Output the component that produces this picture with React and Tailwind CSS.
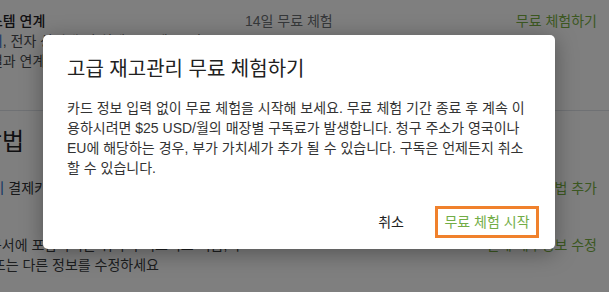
import React from 'react'

const font = { fontFamily: '"Liberation Sans", "Noto Sans CJK KR", sans-serif' }

export default function App() {
    return (
        <div className="relative h-[292px] w-[609px] overflow-hidden bg-white text-[14px] leading-5 text-[#202223]" style={font}>
            {/* Page behind the dialog */}
            <section className="flex h-[111px] items-start border-b border-[#dfe3e8] pt-[11px] pr-3">
                <div className="ml-[-23px] w-[268px] shrink-0">
                    <p className="font-medium text-[#1f2124]">시스템 연계</p>
                    <p className="whitespace-nowrap text-[#4a4d50]">
                        <span className="text-[#2c6ecb]">관리</span>, 전자 상거래 및 회계 시스템 등 외부
                        <br />
                        채널과 연계하여 재고를 관리하세요
                    </p>
                </div>
                <p className="text-[#6d7175]">14일 무료 체험</p>
                <p className="ml-auto text-[#78b043]">무료 체험하기</p>
            </section>

            <section className="pr-3">
                <h2 className="ml-[-71px] pt-[15px] text-[24px] leading-8 text-[#1f2124]">결제 방법</h2>
                <div className="mt-[20px] flex items-center justify-between">
                    <p className="ml-[-60px] whitespace-nowrap text-[#2f3133]">
                        <span className="text-[#2c6ecb]">카카오페이</span> 결제키 설정
                    </p>
                    <p className="text-[#78b043]">결제 방법 추가</p>
                </div>
                <div className="mt-[37px] flex items-start justify-between">
                    <p className="ml-[-24px] whitespace-nowrap text-[#3a3c3e]">
                        청구서에 포함하려는 귀하의 비즈니스 이름, 주
                        <br />
                        소 또는 다른 정보를 수정하세요
                    </p>
                    <p className="text-[#78b043]">결제 세부정보 수정</p>
                </div>
            </section>

            {/* Dialog */}
            <div className="absolute inset-0 bg-black/50 pl-[43px] pt-[35px]">
                <div className="flex h-[214px] w-[512px] flex-col rounded-[5px] bg-white px-6 pt-5 pb-[11px] shadow-[0_4px_22px_rgba(0,0,0,0.35)]">
                    <h1 className="text-[20px] leading-7 text-[#212121]">고급 재고관리 무료 체험하기</h1>
                    <p className="mt-[15px] text-[14px] leading-5 text-[#333333]">
                        카드 정보 입력 없이 무료 체험을 시작해 보세요. 무료 체험 기간 종료 후 계속 이용하시려면 $25 USD/월의 매장별 구독료가 발생합니다. 청구 주소가 영국이나 EU에 해당하는 경우, 부가 가치세가 추가 될 수 있습니다. 구독은 언제든지 취소할 수 있습니다.
                    </p>
                    <div className="mt-auto mr-[-8px] flex items-center justify-end">
                        <button className="mr-[31px] text-[14px] text-[#222222]">취소</button>
                        <button className="flex h-8 w-[104px] items-center justify-center border-[3px] border-[#f0812c] text-[14px] text-[#72ad46]">
                            무료 체험 시작
                        </button>
                    </div>
                </div>
            </div>
        </div>
    )
}
